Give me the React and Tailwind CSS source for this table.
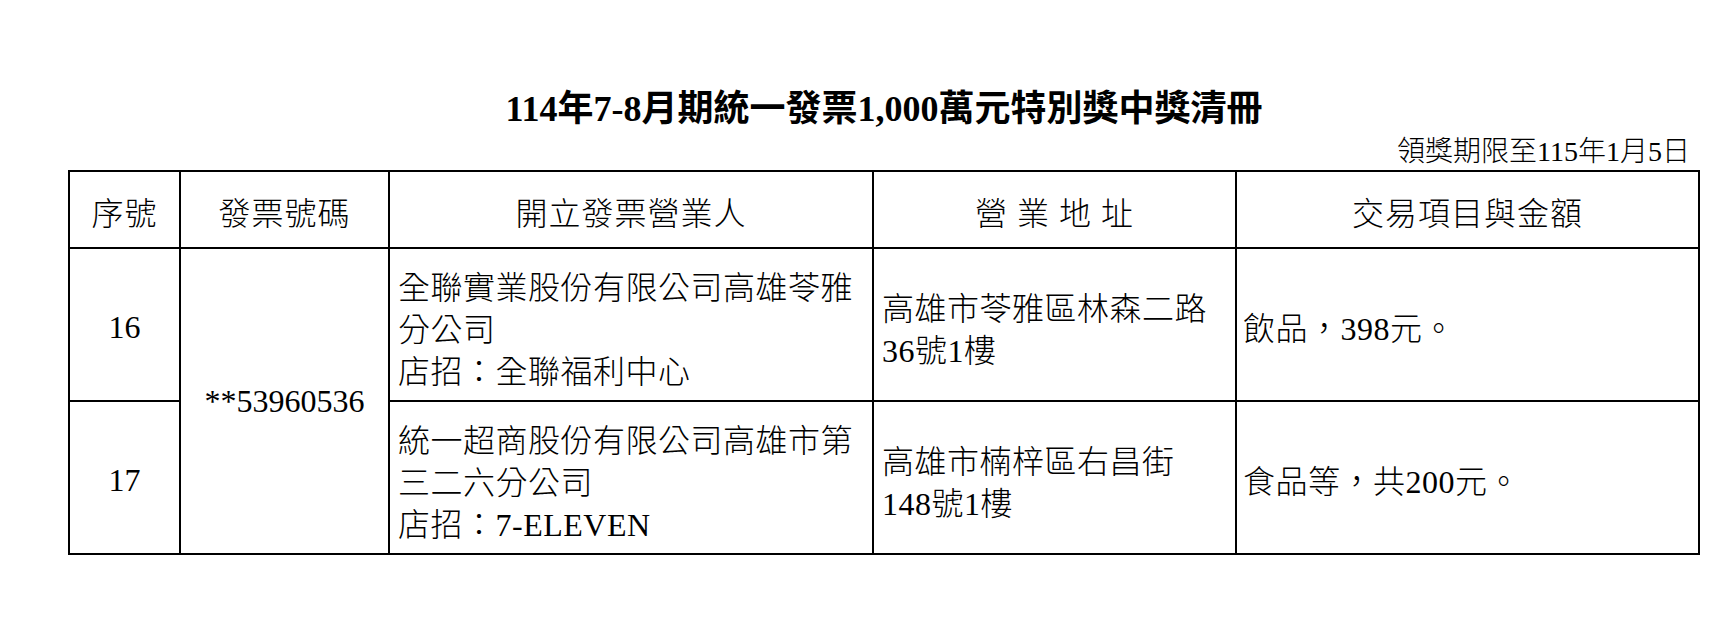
const ROWS = [
  {
    no: '16',
    name: ['全聯實業股份有限公司高雄苓雅', '分公司', '店招：全聯福利中心'],
    addr: ['高雄市苓雅區林森二路', '36號1樓'],
    item: '飲品，398元。',
  },
  {
    no: '17',
    name: ['統一超商股份有限公司高雄市第', '三二六分公司', '店招：7-ELEVEN'],
    addr: ['高雄市楠梓區右昌街', '148號1樓'],
    item: '食品等，共200元。',
  },
];

const HEAD = ['序號', '發票號碼', '開立發票營業人', '營 業 地 址', '交易項目與金額'];

const cell = 'border-r-2 border-b-2 border-black';

export default function App() {
  return (
    <div className="w-[1734px] h-[618px] bg-white text-black font-['Liberation_Serif','Noto_Sans_CJK_TC',serif] overflow-hidden">
      <div className="ml-[68px] w-[1632px] pt-[87px]">
        <h1 className="h-[44px] leading-[44px] text-center text-[36px] font-bold">
          114年7-8月期統一發票1,000萬元特別獎中獎清冊
        </h1>
        <div className="mt-[3px] h-[36px] leading-[36px] text-right text-[28px] font-light pr-[10px]">
          領獎期限至115年1月5日
        </div>

        {/* winners table */}
        <div className="grid grid-cols-[111px_209px_484px_363px_463px] grid-rows-[77px_153px_153px] border-l-2 border-t-2 border-black text-[32px] font-light">
          {HEAD.map((h) => (
            <div key={h} className={`${cell} flex items-center justify-center pt-[8px] tracking-[1px]`}>
              {h}
            </div>
          ))}

          {ROWS.map((r, i) => (
            <Row key={r.no} row={r} first={i === 0} />
          ))}
        </div>
      </div>
    </div>
  );
}

function Row({ row, first }) {
  return (
    <>
      <div className={`${cell} flex items-center justify-center pt-[5px]`}>{row.no}</div>
      {first && (
        <div className={`${cell} row-span-2 flex items-center justify-center`}>**53960536</div>
      )}
      <div className={`${cell} flex flex-col justify-center pl-[8px] pt-[10px] leading-[42px] tracking-[0.5px]`}>
        {row.name.map((l) => (
          <div key={l}>{l}</div>
        ))}
      </div>
      <div className={`${cell} flex flex-col justify-center pl-[8px] pt-[10px] leading-[42px] tracking-[0.5px]`}>
        {row.addr.map((l) => (
          <div key={l}>{l}</div>
        ))}
      </div>
      <div className={`${cell} flex items-center pl-[6px] pt-[8px] tracking-[0.5px]`}>{row.item}</div>
    </>
  );
}
